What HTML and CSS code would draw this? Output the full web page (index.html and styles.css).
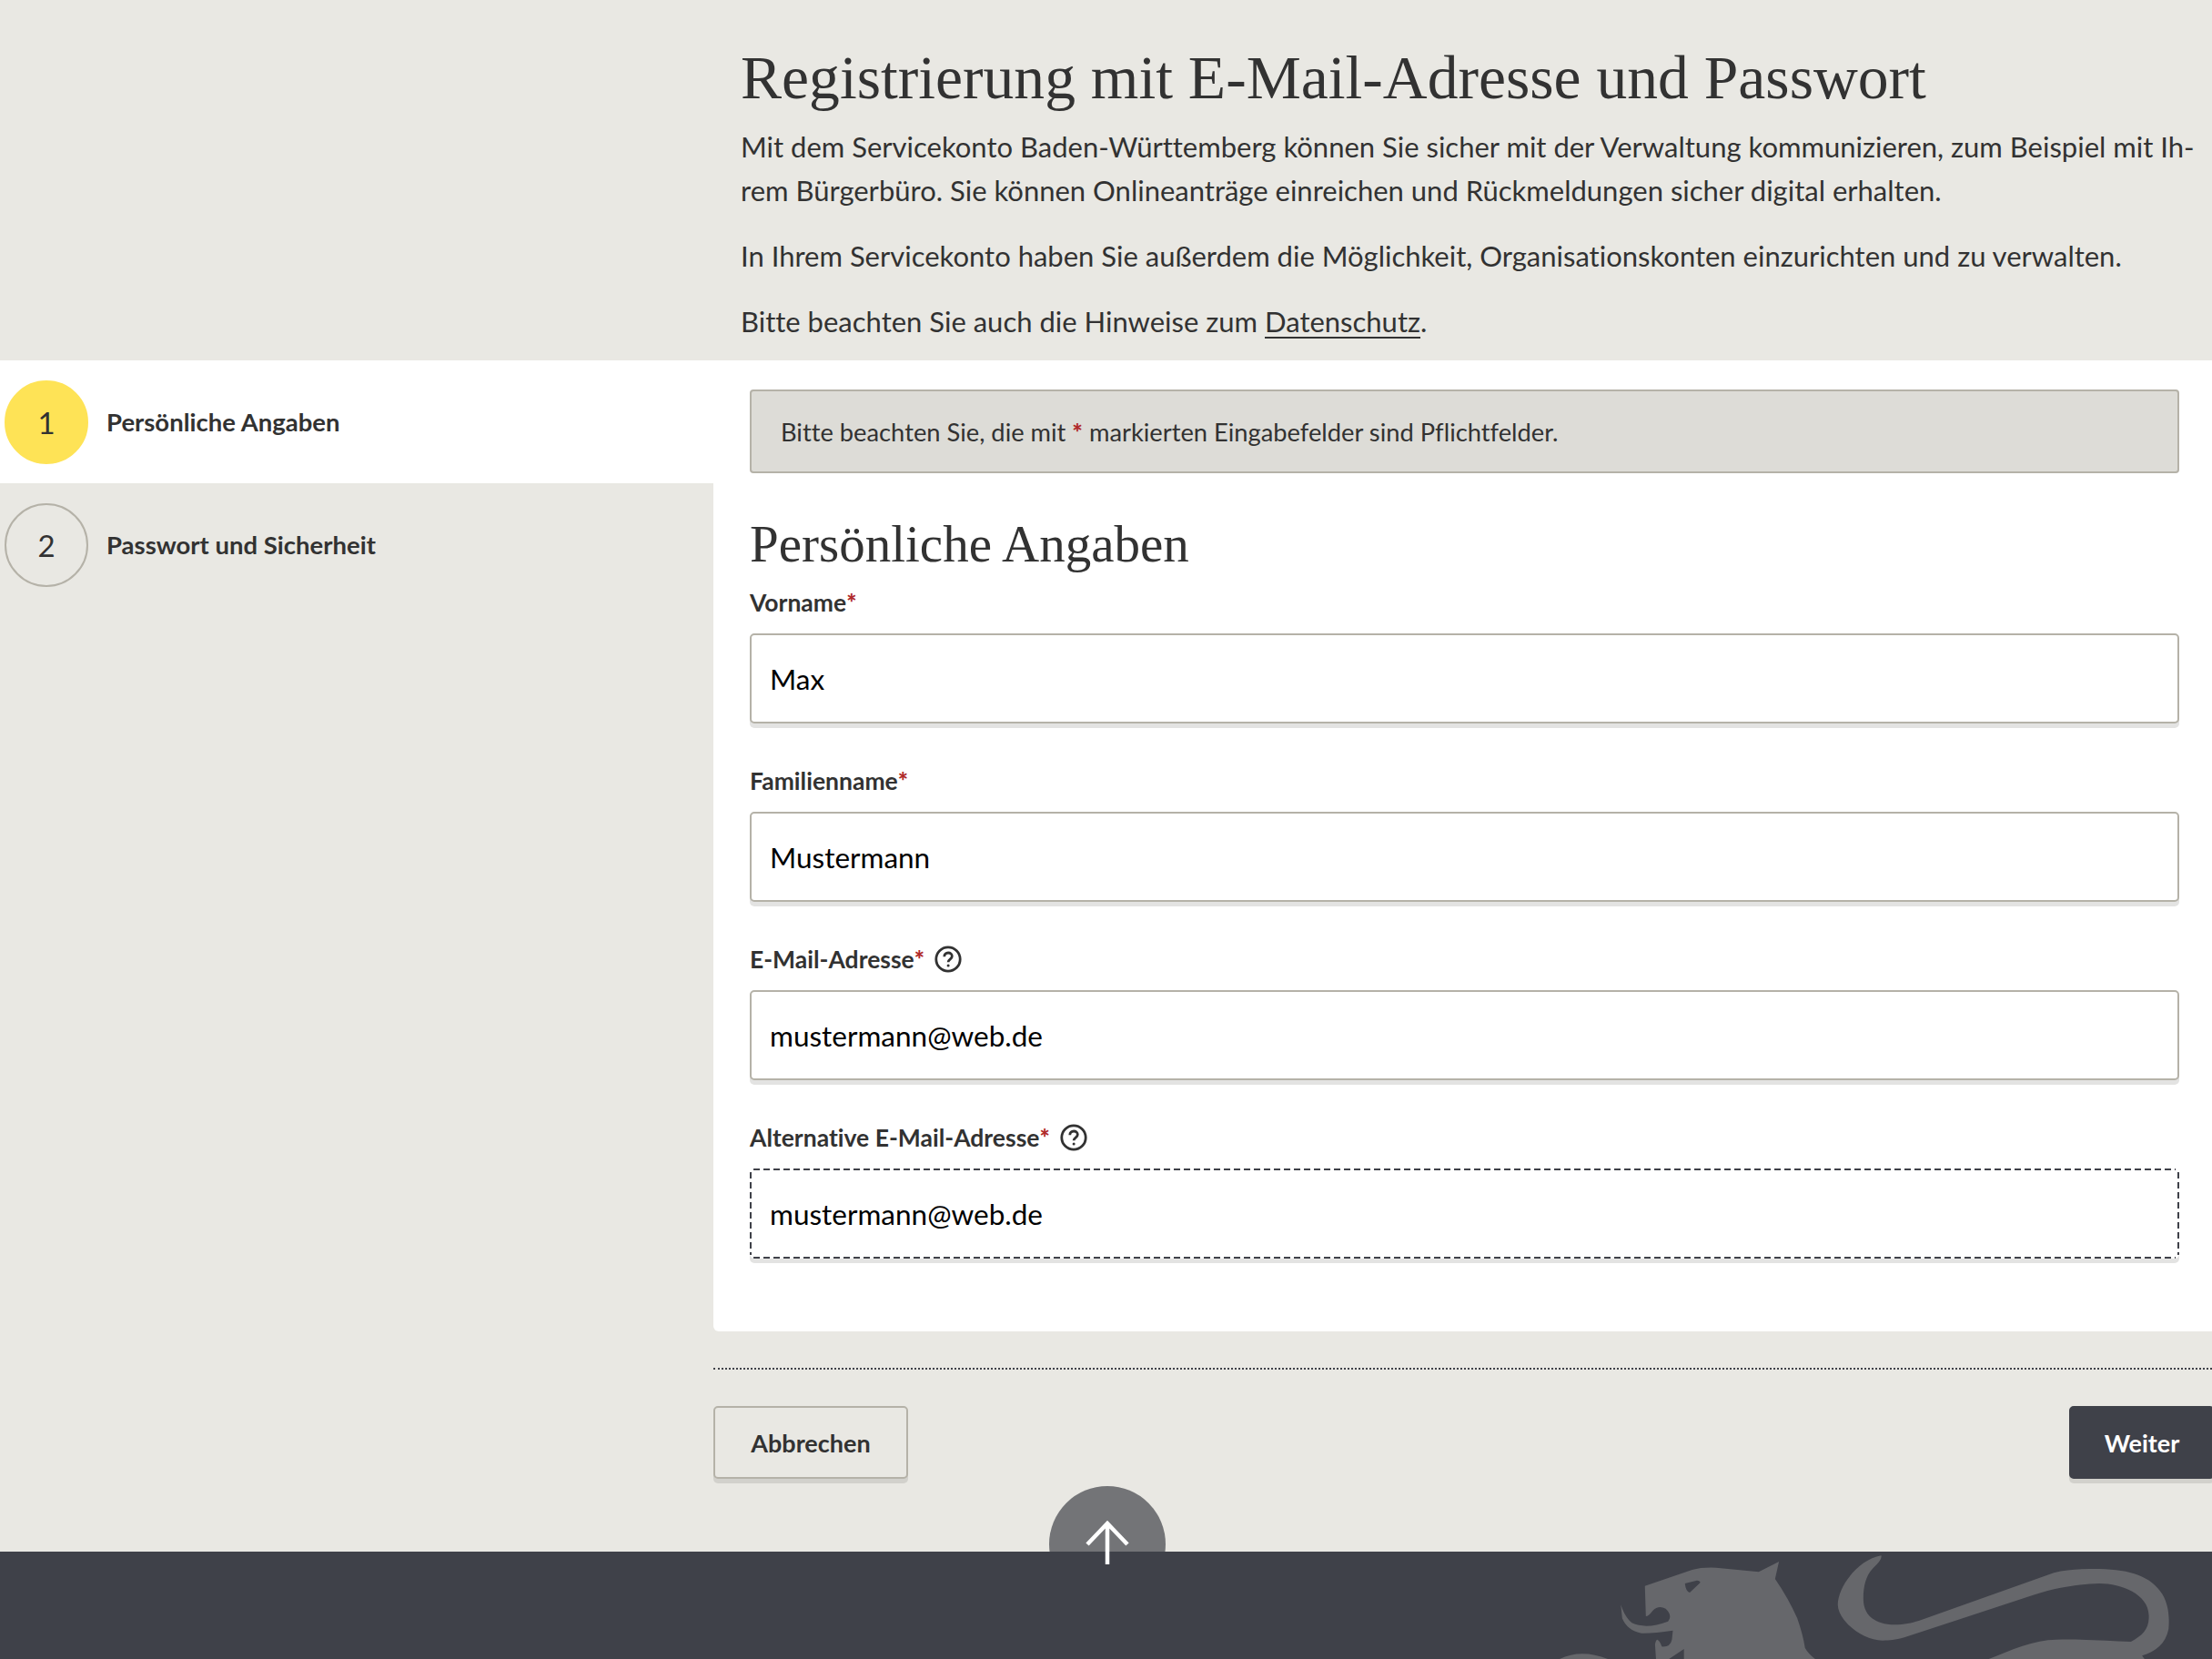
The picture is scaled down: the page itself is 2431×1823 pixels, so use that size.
FILE: index.html
```html
<!DOCTYPE html>
<html lang="de">
<head>
  <meta charset="UTF-8">
  <title>Registrierung mit E-Mail-Adresse und Passwort</title>
  <link rel="stylesheet" href="styles.css">
</head>
<body>
  <header class="intro">
    <h1>Registrierung mit E-Mail-Adresse und Passwort</h1>
    <p>Mit dem Servicekonto Baden-Württemberg können Sie sicher mit der Verwaltung kommunizieren, zum Beispiel mit Ih-<br>rem Bürgerbüro. Sie können Onlineanträge einreichen und Rückmeldungen sicher digital erhalten.</p>
    <p>In Ihrem Servicekonto haben Sie außerdem die Möglichkeit, Organisationskonten einzurichten und zu verwalten.</p>
    <p>Bitte beachten Sie auch die Hinweise zum <a href="#">Datenschutz</a>.</p>
  </header>

  <div class="content">
    <nav class="steps">
      <div class="step active"><span class="step-num">1</span><span class="step-name">Persönliche Angaben</span></div>
      <div class="step"><span class="step-num">2</span><span class="step-name">Passwort und Sicherheit</span></div>
    </nav>

    <main class="main">
      <form class="panel">
        <div class="notice">Bitte beachten Sie, die mit <span class="req">*</span> markierten Eingabefelder sind Pflichtfelder.</div>
        <h2>Persönliche Angaben</h2>

        <div class="field">
          <label for="vorname">Vorname<span class="req">*</span></label>
          <input id="vorname" type="text" value="Max">
        </div>
        <div class="field">
          <label for="familienname">Familienname<span class="req">*</span></label>
          <input id="familienname" type="text" value="Mustermann">
        </div>
        <div class="field">
          <label for="email">E-Mail-Adresse<span class="req">*</span>
            <svg class="help" viewBox="0 0 30 30"><circle cx="15" cy="15" r="13.2"/><path d="M10.8 12.2c0-2.6 1.9-4.2 4.3-4.2s4.2 1.5 4.2 3.7c0 3.3-4.2 3.4-4.2 6.5"/><circle class="dot" cx="15.1" cy="22" r="1.5"/></svg>
          </label>
          <input id="email" type="text" value="mustermann@web.de">
        </div>
        <div class="field">
          <label for="altemail">Alternative E-Mail-Adresse<span class="req">*</span>
            <svg class="help" viewBox="0 0 30 30"><circle cx="15" cy="15" r="13.2"/><path d="M10.8 12.2c0-2.6 1.9-4.2 4.3-4.2s4.2 1.5 4.2 3.7c0 3.3-4.2 3.4-4.2 6.5"/><circle class="dot" cx="15.1" cy="22" r="1.5"/></svg>
          </label>
          <input id="altemail" class="focused" type="text" value="mustermann@web.de">
        </div>
      </form>

      <div class="actions">
        <button class="btn" type="button">Abbrechen</button>
        <button class="btn btn-primary" type="button">Weiter</button>
      </div>
    </main>
  </div>

  <a class="to-top" href="#" aria-label="Nach oben"></a>

  <footer class="footer">
    <div class="crest">
      <svg viewBox="0 0 1568 669" preserveAspectRatio="none">
        <path d="M392 428 490 375Q510 366 540 368L628 382 670 348 662 405Q690 470 708 535 720 590 724 632 730 650 745 669L415 669 413 620Q415 605 418 605 424 612 427 628 445 630 448 605L450 575Q410 585 385 584 355 575 345 535L342 490Q350 530 365 550 395 572 440 545 450 525 435 503 420 490 408 510 400 528 394 528Z"/>
        <path class="cut" d="M475 420 500 410Q510 412 505 420L485 450Q477 448 475 420ZM442 669 473 636 473 669Z"/>
        <path d="M215 669Q260 635 315 669Z"/>
        <path d="M882 328Q885 340 865 370C850 395 845 430 845 470 845 520 865 555 910 556 930 556 945 550 960 543L1240 385C1270 372 1300 372 1335 372 1400 375 1440 395 1465 455 1478 490 1480 530 1478 570 1472 620 1450 645 1423 658L1428 669 1105 669C1150 640 1200 605 1245 605 1300 603 1350 608 1400 612 1425 590 1438 570 1437 525 1436 455 1380 420 1335 420 1280 422 1230 440 1190 462L930 598C910 606 900 608 885 608 840 606 792 540 792 490 792 430 835 340 882 328Z"/>
      </svg>
    </div>
    <svg class="to-top-arrow" viewBox="0 0 48 48"><path d="M24 48V3M2 26 24 3 46 26"/></svg>
  </footer>
</body>
</html>
```

FILE: styles.css
```css
* {
  box-sizing: border-box;
}

html, body {
  margin: 0;
  padding: 0;
}

body {
  position: relative;
  overflow-x: hidden;
  background: #e9e8e3;
  color: #323232;
  font-family: "Lato", "Noto Sans", sans-serif;
  font-size: 31px;
  font-variant-ligatures: none;
}

.intro {
  padding: 50px 0 19px 814px;
}

h1 {
  margin: 0 0 15px;
  font-family: "Liberation Serif", serif;
  font-size: 67.6px;
  font-weight: normal;
  line-height: 72px;
}

.intro p {
  margin: 0 0 24px;
  line-height: 48px;
  white-space: nowrap;
}

.intro p:last-child {
  margin-bottom: 0;
}

.intro a {
  color: inherit;
  text-decoration-thickness: 2px;
  text-underline-offset: 5px;
}

.content {
  display: flex;
}

.steps {
  flex: 0 0 784px;
}

.step {
  display: flex;
  align-items: center;
  gap: 20px;
  height: 135px;
  padding-left: 5px;
}

.step.active {
  background: #fff;
}

.step-num {
  display: flex;
  align-items: center;
  justify-content: center;
  width: 92px;
  height: 92px;
  border: 2px solid #b5b2a8;
  border-radius: 50%;
  font-size: 33px;
}

.step.active .step-num {
  background: #fee356;
  border-color: #fee356;
}

.step-name {
  font-size: 27.5px;
  font-weight: bold;
}

.main {
  flex: 1;
  min-width: 0;
}

.panel {
  padding: 32px 36px 35px 40px;
  background: #fff;
  border-radius: 0 0 0 6px;
}

.notice {
  height: 92px;
  padding-left: 32px;
  background: #dddcd7;
  border: 2px solid #b5b2a8;
  border-radius: 4px;
  font-size: 27.3px;
  line-height: 90px;
}

.req {
  color: #b02a2a;
  font-weight: 900;
}

h2 {
  margin: 43px 0 11px;
  font-family: "Liberation Serif", serif;
  font-size: 57px;
  font-weight: normal;
  line-height: 70px;
}

.field {
  margin-bottom: 45px;
}

.field label {
  display: flex;
  align-items: center;
  height: 36px;
  margin-bottom: 16px;
  font-size: 26.5px;
  font-weight: bold;
}

.help {
  width: 30px;
  height: 30px;
  margin-left: 11px;
  fill: none;
  stroke: #323232;
  stroke-width: 2.8;
}

.help .dot {
  fill: #323232;
  stroke: none;
}

.field input {
  display: block;
  width: 100%;
  height: 99px;
  padding: 0 20px;
  background: #fff;
  border: 2px solid #b5b2a8;
  border-radius: 5px;
  box-shadow: 0 5px 0 #e3e3e2;
  color: #000;
  font-family: inherit;
  font-size: 31.5px;
  font-variant-ligatures: none;
  outline: none;
}

/* long dashes, a dashed border comes out too short at this width */
.field input.focused {
  border-color: transparent;
  background-color: #fff;
  background-clip: border-box;
  background-origin: border-box;
  background-repeat: no-repeat;
  background-image:
    repeating-linear-gradient(90deg, #3f4149 0 7px, transparent 7px 11px),
    repeating-linear-gradient(90deg, #3f4149 0 7px, transparent 7px 11px),
    repeating-linear-gradient(180deg, #3f4149 0 7px, transparent 7px 11px),
    repeating-linear-gradient(180deg, #3f4149 0 7px, transparent 7px 11px);
  background-size:
    calc(100% - 8px) 2px,
    calc(100% - 8px) 2px,
    2px calc(100% - 8px),
    2px calc(100% - 8px);
  background-position:
    4px 0,
    4px 100%,
    0 4px,
    100% 4px;
}

.actions {
  display: flex;
  justify-content: space-between;
  margin-top: 40px;
  padding: 40px 0 80px;
  border-top: 2px dotted #3f4149;
}

.btn {
  width: 214px;
  height: 80px;
  background: #e9e8e3;
  border: 2px solid #b5b2a8;
  border-radius: 5px;
  box-shadow: 0 5px 0 #d2d1cc;
  color: #323232;
  font-family: inherit;
  font-size: 27px;
  font-variant-ligatures: none;
  font-weight: bold;
}

.btn-primary {
  width: 160px;
  margin-right: -3px;
  background: #3f4149;
  border-color: #3f4149;
  color: #fff;
}

.to-top {
  position: absolute;
  top: 1633px;
  left: 1153px;
  width: 128px;
  height: 128px;
  background: #737477;
  border-radius: 50%;
}

.footer {
  position: relative;
  height: 118px;
  background: #3f4149;
}

.crest {
  position: absolute;
  inset: 0;
  overflow: hidden;
}

.crest svg {
  position: absolute;
  top: -105px;
  left: 1600px;
  width: 831px;
  height: 223px;
  fill: #66676b;
}

.crest .cut {
  fill: #3f4149;
}

.to-top-arrow {
  position: absolute;
  top: -34px;
  left: 1193px;
  width: 48px;
  height: 48px;
  overflow: visible;
  fill: none;
  stroke: #fff;
  stroke-width: 4.5;
}
```
